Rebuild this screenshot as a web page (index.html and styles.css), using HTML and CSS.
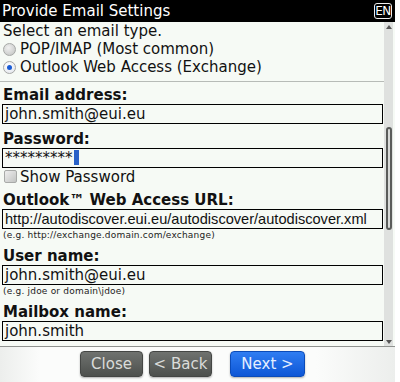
FILE: index.html
```html
<!DOCTYPE html>
<html lang="en">
<head>
  <meta charset="UTF-8">
  <title>Provide Email Settings</title>
  <link rel="stylesheet" href="styles.css">
</head>
<body>

<div class="screen">
  <header class="titlebar">
    <span class="title">Provide Email Settings</span>
    <span class="lang">EN</span>
  </header>

  <div class="content">
    <main class="form">
      <p class="line">Select an email type.</p>
      <div class="option"><span class="radio"></span>POP/IMAP (Most common)</div>
      <div class="option"><span class="radio checked"></span>Outlook Web Access (Exchange)</div>
      <div class="divider"></div>

      <div class="label">Email address:</div>
      <div class="input">john.smith@eui.eu</div>

      <div class="label">Password:</div>
      <div class="input">*********<span class="cursor"></span></div>
      <div class="option check"><span class="checkbox"></span>Show Password</div>

      <div class="label">Outlook™ Web Access URL:</div>
      <div class="input url">http://autodiscover.eui.eu/autodiscover/autodiscover.xml</div>
      <div class="hint">(e.g. http://exchange.domain.com/exchange)</div>

      <div class="label">User name:</div>
      <div class="input">john.smith@eui.eu</div>
      <div class="hint">(e.g. jdoe or domain\jdoe)</div>

      <div class="label">Mailbox name:</div>
      <div class="input">john.smith</div>
    </main>

    <div class="scrollbar">
      <span class="arrow up"></span>
      <span class="thumb"></span>
      <span class="arrow down"></span>
    </div>
  </div>

  <footer class="buttons">
    <button class="btn">Close</button>
    <button class="btn">&lt; Back</button>
    <button class="btn primary">Next &gt;</button>
  </footer>
</div>

</body>
</html>
```

FILE: styles.css
```css
* {
  box-sizing: border-box;
  margin: 0;
  padding: 0;
}

body {
  background: #fff;
  font-family: 'DejaVu Sans', sans-serif;
  font-size: 15px;
  color: #111;
}

.screen {
  width: 395px;
  height: 382px;
  display: flex;
  flex-direction: column;
  background: #f6faf5;
}

.titlebar {
  height: 22px;
  background: #000;
  color: #fff;
  display: flex;
  align-items: flex-start;
  justify-content: space-between;
  padding: 1px 2px 0 2px;
  line-height: 20px;
}

.lang {
  margin-top: 2px;
  margin-right: 1px;
  width: 18px;
  height: 16px;
  border: 1px solid #eee;
  border-radius: 3px;
  font-size: 12px;
  line-height: 14px;
  text-align: center;
  letter-spacing: -0.5px;
}

.content {
  height: 324px;
  display: flex;
  overflow: hidden;
}

.form {
  width: 384px;
  line-height: 18px;
}

.line {
  padding-left: 3px;
}

.option {
  display: flex;
  align-items: center;
  padding-left: 3px;
  height: 18px;
}

.radio {
  width: 13px;
  height: 13px;
  margin-right: 4px;
  border-radius: 50%;
  border: 1px solid #a6a8a6;
  background: radial-gradient(circle at 40% 35%, #f0f0f0, #bfc1bf);
  display: flex;
  align-items: center;
  justify-content: center;
}

.radio.checked {
  background: radial-gradient(circle at 40% 35%, #ffffff, #dfe3ea);
}

.radio.checked::after {
  content: "";
  width: 5px;
  height: 5px;
  border-radius: 50%;
  background: #1a5cd4;
}

.divider {
  height: 1px;
  background: #b7bbb7;
  margin: 5px 0 4px;
}

.label {
  font-weight: bold;
  padding-left: 3px;
  margin-top: 6px;
}

.divider + .label {
  margin-top: 0;
}

.input {
  margin-left: 2px;
  width: 381px;
  height: 20px;
  border: 1px solid #000;
  padding-left: 2px;
  white-space: nowrap;
  overflow: hidden;
  display: flex;
  align-items: flex-start;
}

.input.url {
  font-family: 'Liberation Sans', sans-serif;
  font-size: 14.6px;
}

.cursor {
  display: inline-block;
  width: 5px;
  height: 15px;
  margin-top: 1px;
  margin-left: 1px;
  background: #2a62c8;
}

.check {
  height: 17px;
  padding-left: 4px;
}

.checkbox {
  width: 13px;
  height: 13px;
  margin-right: 3px;
  border: 1px solid #a8aaa8;
  border-radius: 2px;
  background: linear-gradient(135deg, #eeeeee, #c2c4c2);
}

.hint {
  font-size: 9px;
  line-height: 12px;
  letter-spacing: 0.2px;
  padding-left: 3px;
  color: #222;
}

.scrollbar {
  width: 9px;
  background: #dfe1df;
  display: flex;
  flex-direction: column;
  align-items: center;
}

.arrow {
  width: 0;
  height: 0;
  border-left: 3px solid transparent;
  border-right: 3px solid transparent;
}

.arrow.up {
  margin-top: 3px;
  border-bottom: 4px solid #555;
}

.thumb {
  margin-top: 98px;
  width: 6px;
  height: 103px;
  border: 2px solid #5a5c5a;
  border-radius: 3px;
  background: #d8dad8;
}

.arrow.down {
  margin-top: auto;
  margin-bottom: 2px;
  border-top: 4px solid #555;
}

.buttons {
  flex: 1;
  border-top: 1px solid #8f928f;
  background: linear-gradient(90deg, #eceeec 0, #fbfcfb 10%, #fbfcfb 80%, #eceeec 100%);
  display: flex;
  align-items: flex-start;
  padding: 4px 0 0 80px;
  gap: 6px;
}

.btn {
  width: 63px;
  height: 26px;
  font-family: 'DejaVu Sans', sans-serif;
  font-size: 15px;
  line-height: 24px;
  color: #dadcda;
  border: 1px solid #444644;
  border-radius: 4px;
  background: linear-gradient(#6f726f, #4d504d);
  box-shadow: 0 1px 2px rgba(0, 0, 0, 0.3);
}

.btn.primary {
  width: 75px;
  margin-left: 12px;
  color: #e6efff;
  border-color: #0b4bb8;
  background: linear-gradient(#2f7df2, #0d56d6);
}
```
